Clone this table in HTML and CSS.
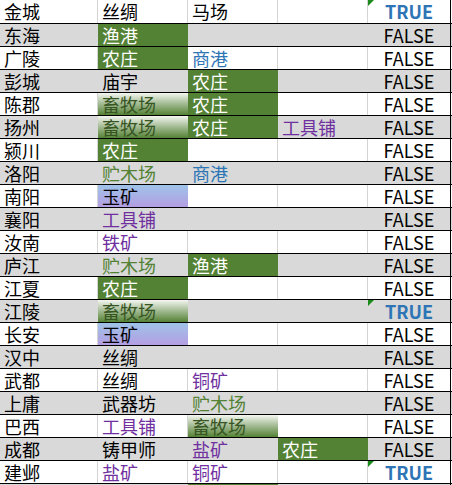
FILE: index.html
```html
<!DOCTYPE html>
<html lang="zh">
<head>
<meta charset="utf-8">
<link rel="stylesheet" href="styles.css">
</head>
<body>
<div class="sheet">
  <div class="row w first"><div class="c">金城</div><div class="c">丝绸</div><div class="c">马场</div><div class="c"></div><div class="c b t flag">TRUE</div></div>
  <div class="row g"><div class="c">东海</div><div class="c fg">渔港</div><div class="c"></div><div class="c"></div><div class="c b">FALSE</div></div>
  <div class="row w"><div class="c">广陵</div><div class="c fg">农庄</div><div class="c blue">商港</div><div class="c"></div><div class="c b">FALSE</div></div>
  <div class="row g"><div class="c">彭城</div><div class="c">庙宇</div><div class="c fg">农庄</div><div class="c"></div><div class="c b">FALSE</div></div>
  <div class="row w"><div class="c">陈郡</div><div class="c fgrad">畜牧场</div><div class="c fg">农庄</div><div class="c"></div><div class="c b">FALSE</div></div>
  <div class="row g"><div class="c">扬州</div><div class="c fgrad">畜牧场</div><div class="c fg">农庄</div><div class="c purple">工具铺</div><div class="c b">FALSE</div></div>
  <div class="row w"><div class="c">颍川</div><div class="c fg">农庄</div><div class="c"></div><div class="c"></div><div class="c b">FALSE</div></div>
  <div class="row g"><div class="c">洛阳</div><div class="c olive">贮木场</div><div class="c blue">商港</div><div class="c"></div><div class="c b">FALSE</div></div>
  <div class="row w"><div class="c">南阳</div><div class="c jade">玉矿</div><div class="c"></div><div class="c"></div><div class="c b">FALSE</div></div>
  <div class="row g"><div class="c">襄阳</div><div class="c purple">工具铺</div><div class="c"></div><div class="c"></div><div class="c b">FALSE</div></div>
  <div class="row w"><div class="c">汝南</div><div class="c purple">铁矿</div><div class="c"></div><div class="c"></div><div class="c b">FALSE</div></div>
  <div class="row g"><div class="c">庐江</div><div class="c olive">贮木场</div><div class="c fg">渔港</div><div class="c"></div><div class="c b">FALSE</div></div>
  <div class="row w"><div class="c">江夏</div><div class="c fg">农庄</div><div class="c"></div><div class="c"></div><div class="c b">FALSE</div></div>
  <div class="row g"><div class="c">江陵</div><div class="c fgrad">畜牧场</div><div class="c"></div><div class="c"></div><div class="c b t flag">TRUE</div></div>
  <div class="row w"><div class="c">长安</div><div class="c jade">玉矿</div><div class="c"></div><div class="c"></div><div class="c b">FALSE</div></div>
  <div class="row g"><div class="c">汉中</div><div class="c">丝绸</div><div class="c"></div><div class="c"></div><div class="c b">FALSE</div></div>
  <div class="row w"><div class="c">武都</div><div class="c">丝绸</div><div class="c purple">铜矿</div><div class="c"></div><div class="c b">FALSE</div></div>
  <div class="row g"><div class="c">上庸</div><div class="c">武器坊</div><div class="c olive">贮木场</div><div class="c"></div><div class="c b">FALSE</div></div>
  <div class="row w"><div class="c">巴西</div><div class="c purple">工具铺</div><div class="c fgrad">畜牧场</div><div class="c"></div><div class="c b">FALSE</div></div>
  <div class="row g"><div class="c">成都</div><div class="c">铸甲师</div><div class="c purple">盐矿</div><div class="c fg">农庄</div><div class="c b">FALSE</div></div>
  <div class="row w"><div class="c">建邺</div><div class="c purple">盐矿</div><div class="c purple">铜矿</div><div class="c"></div><div class="c b t flag">TRUE</div></div>
  <div class="row g last"><div class="c"></div><div class="c"></div><div class="c fg"></div><div class="c"></div><div class="c b"></div></div>
</div>
</body>
</html>
```
FILE: styles.css
```css
html, body {
  margin: 0;
  padding: 0;
  background: #ffffff;
  overflow: hidden;
}
.sheet {
  width: 452px;
  height: 485px;
  overflow: hidden;
  font-family: "Noto Sans CJK SC", "Noto Sans", sans-serif;
  font-size: 18px;
  color: #000000;
}
.row {
  display: grid;
  grid-template-columns: 98px 90px 90px 90px 83px;
  height: 23px;
  box-sizing: border-box;
  border-bottom: 1px solid #000000;
}
.row.first {
  height: 24px;
}
.row.last {
  border-bottom: 0;
}
.row.g {
  background: #d9d9d9;
}
.c {
  box-sizing: border-box;
  border-right: 1px solid #d4d4d4;
  padding-left: 4px;
  line-height: 22px;
  white-space: nowrap;
  position: relative;
  background-origin: border-box;
}
.row.first .c {
  line-height: 23px;
}
.row.g .c {
  border-right-color: #d9d9d9;
}
.row .c.b {
  border-right: 1px solid #000000;
  text-align: center;
  padding-left: 0;
}
.row .c.fg {
  background: #548235;
  border-right-color: #548235;
  color: #ffffff;
}
.row .c.fgrad {
  background: linear-gradient(to bottom, #f4f7f1 0%, #a9bf9a 45%, #548235 100%);
  border-right-color: transparent;
  color: #375623;
}
.row .c.jade {
  background: linear-gradient(to bottom, #9fc3e8 0%, #b49ee2 100%);
  border-right-color: transparent;
  color: #000000;
}
.blue {
  color: #2e75b6;
}
.purple {
  color: #7030a0;
}
.olive {
  color: #548235;
}
.t {
  color: #2e75b6;
  font-weight: bold;
}
.flag::before {
  content: "";
  position: absolute;
  left: 0;
  top: 0;
  border-top: 6px solid #1a8a1a;
  border-right: 6px solid transparent;
}
```
